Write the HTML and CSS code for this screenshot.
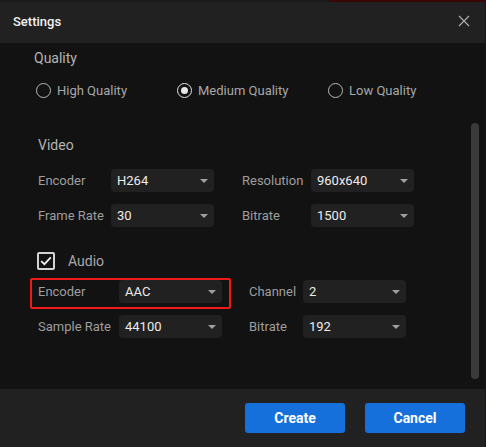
FILE: index.html
```html
<!DOCTYPE html>
<html>
<head>
<meta charset="utf-8">
<link rel="stylesheet" href="styles.css">
</head>
<body>
<div class="dialog">
  <div class="header">
    <span class="title">Settings</span>
    <svg class="close" width="12" height="12" viewBox="0 0 12 12"><path d="M1 1L11 11M11 1L1 11" stroke="#a8a8a8" stroke-width="1.3" fill="none"/></svg>
  </div>
  <div class="content">
    <div class="scroll-thumb"></div>
    <div class="sec-title quality">Quality</div>
    <div class="radios">
      <label class="radio r-high"><span class="circle"></span>High Quality</label>
      <label class="radio r-med"><span class="circle on"></span>Medium Quality</label>
      <label class="radio"><span class="circle"></span>Low Quality</label>
    </div>
    <div class="sec-title video">Video</div>
    <div class="grid video-grid">
      <span class="lbl">Encoder</span>
      <div class="select">H264<i class="arrow"></i></div>
      <span></span>
      <span class="lbl">Resolution</span>
      <div class="select">960x640<i class="arrow"></i></div>
      <span class="lbl">Frame Rate</span>
      <div class="select">30<i class="arrow"></i></div>
      <span></span>
      <span class="lbl">Bitrate</span>
      <div class="select">1500<i class="arrow"></i></div>
    </div>
    <div class="check-row">
      <span class="checkbox"><svg width="12" height="10" viewBox="0 0 12 10"><path d="M1.2 5.2L4.4 8.2L10.8 1.4" stroke="#f0f0f0" stroke-width="1.8" fill="none"/></svg></span>
      <span class="check-label">Audio</span>
    </div>
    <div class="grid audio-grid">
      <span class="highlight"></span>
      <span class="lbl">Encoder</span>
      <div class="select">AAC<i class="arrow"></i></div>
      <span></span>
      <span class="lbl">Channel</span>
      <div class="select">2<i class="arrow"></i></div>
      <span class="lbl">Sample Rate</span>
      <div class="select">44100<i class="arrow"></i></div>
      <span></span>
      <span class="lbl">Bitrate</span>
      <div class="select">192<i class="arrow"></i></div>
    </div>
  </div>
  <div class="footer">
    <button class="btn">Create</button>
    <button class="btn">Cancel</button>
  </div>
</div>
</body>
</html>
```
FILE: styles.css
```css
* { box-sizing: border-box; }
html, body { margin: 0; padding: 0; }
body {
  width: 486px;
  height: 447px;
  overflow: hidden;
  background: linear-gradient(to right, #1b1b1b 0, #1b1b1b 329px, #3a0606 329px, #3a0606 100%);
  font-family: Roboto, "Liberation Sans", sans-serif;
}
.dialog {
  margin-top: 2px;
  width: 485px;
  height: 445px;
  display: flex;
  flex-direction: column;
  background: #121212;
}
.header {
  height: 41px;
  flex: none;
  background: #212121;
  display: flex;
  align-items: center;
  justify-content: space-between;
  padding: 0 15px 0 13px;
}
.title {
  color: #f2f2f2;
  font-size: 13px;
  font-weight: 500;
  margin-top: -2px;
}
.close { margin-top: -3px; }
.content {
  position: relative;
  height: 346px;
  flex: none;
  padding: 5px 0 0 34px;
  background: #121212;
}
.scroll-thumb {
  position: absolute;
  left: 471px;
  top: 80px;
  width: 8px;
  height: 256px;
  border-radius: 4px;
  background: #3a3a3a;
}
.sec-title {
  color: #b4b4b4;
  font-size: 14px;
  line-height: 20px;
  height: 20px;
}
.radios {
  display: flex;
  margin-top: 12px;
  padding-left: 2px;
  height: 20px;
  align-items: center;
}
.radio {
  display: flex;
  align-items: center;
  color: #a8a8a8;
  font-size: 13px;
  gap: 6px;
}
.r-high { width: 141px; }
.r-med { width: 151px; }
.circle {
  width: 15px;
  height: 15px;
  border-radius: 50%;
  border: 1.5px solid #b8b8b8;
  display: flex;
  align-items: center;
  justify-content: center;
}
.circle.on { border-color: #e0e0e0; }
.circle.on::after {
  content: "";
  width: 7px;
  height: 7px;
  border-radius: 50%;
  background: #e6e6e6;
}
.video { margin-top: 35px; padding-left: 4px; }
.grid {
  display: grid;
  row-gap: 12px;
  padding-left: 4px;
  align-items: center;
}
.video-grid {
  margin-top: 14px;
  grid-template-columns: 73px 103px 28px 69px 103px;
}
.audio-grid {
  position: relative;
  margin-top: 10px;
  row-gap: 12px;
  grid-template-columns: 81px 103px 27px 54px 103px;
}
.lbl {
  color: #9e9e9e;
  font-size: 13px;
  white-space: nowrap;
}
.select {
  position: relative;
  height: 23px;
  background: #212121;
  border-radius: 4px;
  color: #ececec;
  font-size: 13px;
  line-height: 23px;
  padding-left: 6px;
}
.arrow {
  position: absolute;
  right: 6px;
  top: 10px;
  width: 0;
  height: 0;
  border-left: 4px solid transparent;
  border-right: 4px solid transparent;
  border-top: 4px solid #a0a0a0;
}
.check-row {
  margin-top: 25px;
  padding-left: 3px;
  display: flex;
  align-items: center;
  height: 18px;
}
.checkbox {
  width: 18px;
  height: 18px;
  border: 2px solid #d4d4d4;
  border-radius: 2px;
  display: flex;
  align-items: center;
  justify-content: center;
}
.check-label {
  margin-left: 13px;
  color: #a8a8a8;
  font-size: 14px;
}
.highlight {
  position: absolute;
  left: -4px;
  top: -2px;
  width: 201px;
  height: 31px;
  border: 2px solid #f01818;
  border-radius: 2px;
}
.footer {
  flex: 1;
  background: #212121;
  display: flex;
  justify-content: flex-end;
  align-items: flex-start;
  gap: 20px;
  padding: 14px 20px 0 0;
}
.btn {
  width: 100px;
  height: 30px;
  border: none;
  border-radius: 3px;
  background: #1570dc;
  color: #ffffff;
  font-family: Roboto, "Liberation Sans", sans-serif;
  font-size: 14px;
  font-weight: 700;
}
```
